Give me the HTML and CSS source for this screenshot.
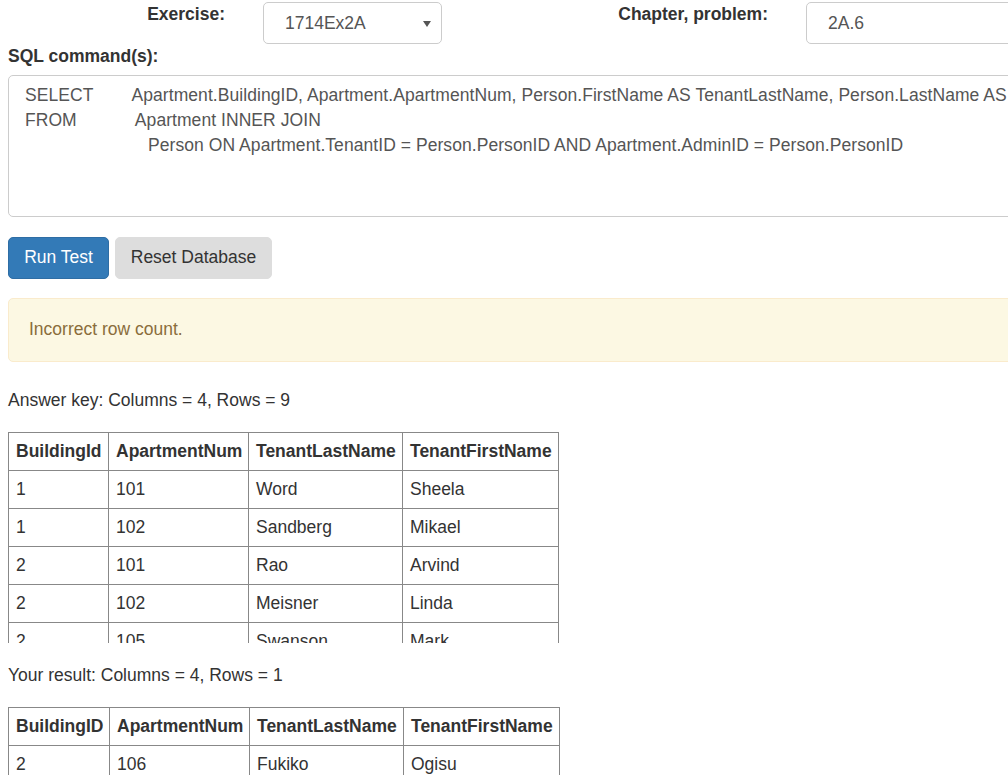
FILE: index.html
```html
<!DOCTYPE html>
<html>
<head>
<meta charset="utf-8">
<link rel="stylesheet" href="styles.css">
</head>
<body>
<div class="page">
  <div class="form-row">
    <label class="lbl">Exercise:</label>
    <div class="cell cell-select">
      <div class="select">
        <span>1714Ex2A</span>
        <svg class="caret" width="8" height="6" viewBox="0 0 8 6"><path d="M0 0 L8 0 L4 6 Z" fill="#555"/></svg>
      </div>
    </div>
    <label class="lbl">Chapter, problem:</label>
    <div class="cell cell-input">
      <div class="input">2A.6</div>
    </div>
  </div>
  <div class="sql-label">SQL command(s):</div>
  <div class="sql">SELECT        Apartment.BuildingID, Apartment.ApartmentNum, Person.FirstName AS TenantLastName, Person.LastName AS TenantFirstName
FROM            Apartment INNER JOIN
                         Person ON Apartment.TenantID = Person.PersonID AND Apartment.AdminID = Person.PersonID</div>
  <div class="btns">
    <button class="btn btn-primary">Run Test</button>
    <button class="btn btn-default">Reset Database</button>
  </div>
  <div class="alert">Incorrect row count.</div>
  <p class="summary summary-key">Answer key: Columns = 4, Rows = 9</p>
  <div class="scroll">
    <table class="res res-key">
      <thead>
        <tr><th>BuildingId</th><th>ApartmentNum</th><th>TenantLastName</th><th>TenantFirstName</th></tr>
      </thead>
      <tbody>
        <tr><td>1</td><td>101</td><td>Word</td><td>Sheela</td></tr>
        <tr><td>1</td><td>102</td><td>Sandberg</td><td>Mikael</td></tr>
        <tr><td>2</td><td>101</td><td>Rao</td><td>Arvind</td></tr>
        <tr><td>2</td><td>102</td><td>Meisner</td><td>Linda</td></tr>
        <tr><td>2</td><td>105</td><td>Swanson</td><td>Mark</td></tr>
        <tr><td>2</td><td>106</td><td>Ogisu</td><td>Fukiko</td></tr>
        <tr><td>3</td><td>101</td><td>Lee</td><td>Jennifer</td></tr>
        <tr><td>3</td><td>102</td><td>Carter</td><td>Tim</td></tr>
        <tr><td>3</td><td>103</td><td>Ruiz</td><td>Maria</td></tr>
      </tbody>
    </table>
  </div>
  <p class="summary summary-res">Your result: Columns = 4, Rows = 1</p>
  <table class="res res-user">
    <thead>
      <tr><th>BuildingID</th><th>ApartmentNum</th><th>TenantLastName</th><th>TenantFirstName</th></tr>
    </thead>
    <tbody>
      <tr><td>2</td><td>106</td><td>Fukiko</td><td>Ogisu</td></tr>
    </tbody>
  </table>
</div>
</body>
</html>
```
FILE: styles.css
```css
html, body {
  margin: 0;
  padding: 0;
  background: #fff;
  overflow: hidden;
}
body {
  font-family: "Liberation Sans", Arial, sans-serif;
  font-size: 17.5px;
  line-height: 25px;
  color: #333;
  width: 1008px;
  height: 775px;
}
.page {
  padding-left: 8px;
}
.form-row {
  display: grid;
  grid-template-columns: 236px 217px 326px 240px;
  margin-top: 2px;
  height: 42px;
}
.lbl {
  font-weight: bold;
  text-align: right;
  padding-right: 19px;
  line-height: 25px;
}
.cell-select {
  padding: 0 19px;
}
.cell-input {
  padding-left: 19px;
}
.select, .input {
  box-sizing: border-box;
  height: 42px;
  border: 1px solid #ccc;
  border-radius: 5px;
  background: #fff;
  color: #555;
  display: flex;
  align-items: center;
  padding-left: 21px;
}
.select {
  justify-content: space-between;
  padding-right: 10px;
}
.input {
  width: 240px;
}
.caret {
  display: block;
  margin-top: 1px;
}
.sql-label {
  font-weight: bold;
  margin-bottom: 6px;
}
.sql {
  box-sizing: border-box;
  width: 1100px;
  height: 142px;
  border: 1px solid #ccc;
  border-radius: 5px;
  padding: 7px 15px 7px 16px;
  white-space: pre;
  overflow: hidden;
  color: #555;
  letter-spacing: 0.06px;
}
.btns {
  display: flex;
  gap: 6px;
  margin-top: 20px;
}
.btn {
  font-family: inherit;
  font-size: 17.5px;
  line-height: 25px;
  height: 42px;
  border-radius: 5px;
  padding: 0 0 1px;
  border: 1px solid transparent;
  white-space: nowrap;
  text-align: center;
  cursor: pointer;
}
.btn-primary {
  width: 101px;
  background: #337ab7;
  border-color: #2e6da4;
  color: #fff;
}
.btn-default {
  width: 157px;
  background: #ddd;
  border-color: #ddd;
  color: #333;
}
.alert {
  box-sizing: border-box;
  width: 1100px;
  height: 64px;
  margin-top: 19px;
  padding: 18px 20px;
  background: #fcf8e3;
  border: 1px solid #faebcc;
  border-radius: 5px;
  color: #8a6d3b;
}
.summary {
  margin: 0;
}
.summary-key {
  margin-top: 26px;
  margin-bottom: 19px;
}
.scroll {
  height: 211px;
  overflow: hidden;
  width: 560px;
}
.summary-res {
  margin-top: 20px;
  margin-bottom: 19px;
}
.res {
  border-collapse: collapse;
  table-layout: fixed;
}
.res th, .res td {
  box-sizing: border-box;
  border: 1px solid #888;
  padding: 6px 7px;
  text-align: left;
  line-height: 25px;
  white-space: nowrap;
  overflow: hidden;
}
.res th {
  font-weight: bold;
}
.res-key {
  width: 550px;
}
.res-key th:nth-child(1) { width: 100px; }
.res-key th:nth-child(2) { width: 140px; }
.res-key th:nth-child(3) { width: 154px; }
.res-key th:nth-child(4) { width: 156px; }
.res-user {
  width: 551px;
}
.res-user th:nth-child(1) { width: 101px; }
.res-user th:nth-child(2) { width: 140px; }
.res-user th:nth-child(3) { width: 154px; }
.res-user th:nth-child(4) { width: 156px; }
```
